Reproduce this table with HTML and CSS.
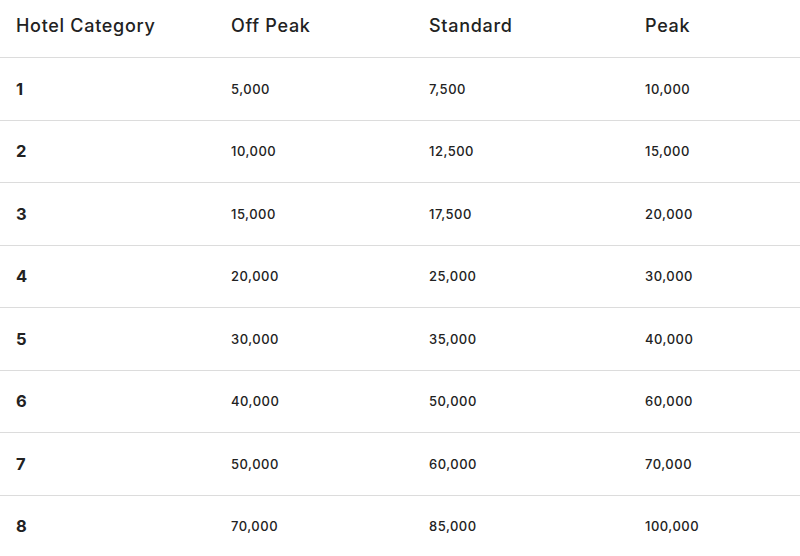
FILE: index.html
```html
<!DOCTYPE html>
<html lang="en">
<head>
<meta charset="utf-8">
<title>Hotel Categories</title>
<link rel="stylesheet" href="styles.css">
</head>
<body>
<div class="table">
  <div class="row head">
    <div class="cell">Hotel Category</div>
    <div class="cell">Off Peak</div>
    <div class="cell">Standard</div>
    <div class="cell">Peak</div>
  </div>
  <div class="row"><div class="cell cat">1</div><div class="cell">5,000</div><div class="cell">7,500</div><div class="cell">10,000</div></div>
  <div class="row"><div class="cell cat">2</div><div class="cell">10,000</div><div class="cell">12,500</div><div class="cell">15,000</div></div>
  <div class="row"><div class="cell cat">3</div><div class="cell">15,000</div><div class="cell">17,500</div><div class="cell">20,000</div></div>
  <div class="row"><div class="cell cat">4</div><div class="cell">20,000</div><div class="cell">25,000</div><div class="cell">30,000</div></div>
  <div class="row"><div class="cell cat">5</div><div class="cell">30,000</div><div class="cell">35,000</div><div class="cell">40,000</div></div>
  <div class="row"><div class="cell cat">6</div><div class="cell">40,000</div><div class="cell">50,000</div><div class="cell">60,000</div></div>
  <div class="row"><div class="cell cat">7</div><div class="cell">50,000</div><div class="cell">60,000</div><div class="cell">70,000</div></div>
  <div class="row"><div class="cell cat">8</div><div class="cell">70,000</div><div class="cell">85,000</div><div class="cell">100,000</div></div>
</div>
</body>
</html>
```
FILE: styles.css
```css
html, body {
  margin: 0;
  padding: 0;
  background: #ffffff;
}
body {
  font-family: "Inter", "Open Sans", "Liberation Sans", sans-serif;
  color: #222222;
}
.table {
  display: flex;
  flex-direction: column;
  width: 800px;
}
.row {
  display: grid;
  grid-template-columns: 215px 198px 216px 1fr;
  align-items: center;
  height: 61.5px;
  border-top: 1px solid #dcdcdc;
  font-size: 13px;
  font-weight: 500;
  letter-spacing: 0.5px;
}
.row.head {
  height: 50px;
  padding-bottom: 7px;
  border-top: none;
  font-size: 18px;
  font-weight: 500;
  letter-spacing: 0.7px;
}
.cell {
  padding-left: 16px;
}
.cat {
  font-size: 16.5px;
  font-weight: 700;
  letter-spacing: 0;
}
```
